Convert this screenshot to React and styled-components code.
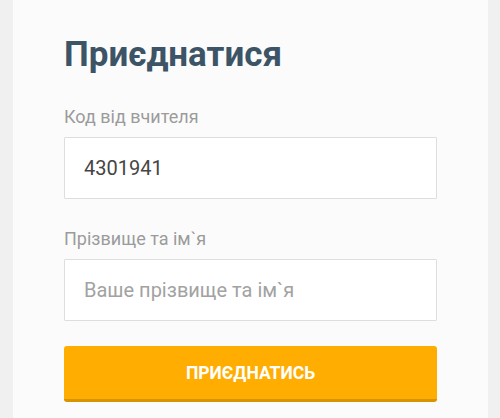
import React, { useState } from "react";
import styled, { createGlobalStyle } from "styled-components";

const GlobalStyle = createGlobalStyle`
  html, body {
    margin: 0;
    padding: 0;
    background: #f0f0f0;
    font-family: Roboto, "Noto Sans", sans-serif;
  }
`;

const Page = styled.div`
  display: flex;
  padding: 0 12px 0 13px;
  min-height: 418px;
  box-sizing: border-box;
`;

const Card = styled.form`
  flex: 1;
  display: flex;
  flex-direction: column;
  background: #fbfbfb;
  padding: 35px 51px 0 51px;
`;

const Title = styled.h1`
  margin: 0 0 32px;
  font-size: 35px;
  font-weight: 700;
  color: #3c5466;
  line-height: 40px;
`;

const Label = styled.label`
  display: block;
  font-size: 18px;
  color: #9b9b9b;
  line-height: 20px;
  margin-bottom: 10px;
`;

const Field = styled.div`
  display: flex;
  flex-direction: column;
  margin-bottom: ${(p) => p.$gap}px;
`;

const Input = styled.input`
  box-sizing: border-box;
  height: 62px;
  padding: 0 19px;
  border: 1px solid #dedede;
  border-radius: 1px;
  background: #fff;
  font-family: Roboto, "Noto Sans", sans-serif;
  font-size: 20px;
  color: #454545;
  outline: none;

  &::placeholder {
    color: #a2a2a2;
  }
`;

const Button = styled.button`
  height: 56px;
  padding-top: 2px;
  border: none;
  border-bottom: 3px solid #d89300;
  border-radius: 3px;
  background: #ffad00;
  color: #fff;
  font-family: Roboto, "Noto Sans", sans-serif;
  font-size: 17.5px;
  font-weight: 700;
  text-transform: uppercase;
  cursor: pointer;
`;

export default function App() {
  const [code, setCode] = useState("4301941");
  const [name, setName] = useState("");

  return (
    <>
      <GlobalStyle />
      <Page>
        <Card onSubmit={(e) => e.preventDefault()}>
          <Title>Приєднатися</Title>
          <Field $gap={30}>
            <Label htmlFor="code">Код від вчителя</Label>
            <Input id="code" value={code} onChange={(e) => setCode(e.target.value)} />
          </Field>
          <Field $gap={25}>
            <Label htmlFor="name">Прізвище та ім`я</Label>
            <Input
              id="name"
              placeholder="Ваше прізвище та ім`я"
              value={name}
              onChange={(e) => setName(e.target.value)}
            />
          </Field>
          <Button type="submit">Приєднатись</Button>
        </Card>
      </Page>
    </>
  );
}
